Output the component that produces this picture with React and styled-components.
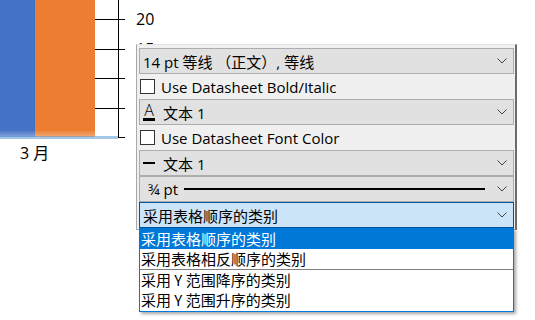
import React from "react";
import styled, { createGlobalStyle } from "styled-components";

const GlobalStyle = createGlobalStyle`
  html, body {
    margin: 0;
    padding: 0;
    background: #ffffff;
  }
  body {
    font-family: "Open Sans", "Noto Sans CJK SC", sans-serif;
    color: #000;
  }
`;

const Stage = styled.div`
  position: relative;
  width: 535px;
  height: 320px;
  overflow: hidden;
  background: #fff;
`;

const ChartSvg = styled.svg`
  display: block;
`;

const Panel = styled.div`
  position: absolute;
  left: 136px;
  top: 44px;
  width: 381px;
  box-sizing: border-box;
  padding: 3px 1px 1px 2px;
  background: #f0f0f0;
  border-top: 1px solid #e3e3e3;
  border-left: 1px solid #a9a9a9;
  border-right: 2px solid #6b6b6b;
  border-bottom: 1px solid #a9a9a9;
  display: flex;
  flex-direction: column;
`;

const Dropdown = styled.div`
  height: 26px;
  box-sizing: border-box;
  display: flex;
  align-items: center;
  padding: 0 6px 0 3px;
  background: ${(p) => (p.$focused ? "#cce4f7" : "#e1e1e1")};
  border: 1px solid ${(p) => (p.$focused ? "#005499" : "#adadad")};
  font-size: 15px;
  white-space: nowrap;
`;

const Value = styled.div`
  flex: 1;
  display: flex;
  align-items: center;
  gap: 6px;
  min-width: 0;
`;

const CheckRow = styled.label`
  height: 25px;
  display: flex;
  align-items: center;
  gap: 6px;
  padding-left: 1px;
  font-size: 15px;
  white-space: nowrap;
`;

const CheckBox = styled.span`
  flex-shrink: 0;
  width: 13px;
  height: 13px;
  background: #fff;
  border: 1px solid #333;
`;

const FontColorIcon = styled.span`
  position: relative;
  flex-shrink: 0;
  width: 12px;
  height: 20px;
  display: inline-flex;
  justify-content: center;
  font-family: "Open Sans", sans-serif;
  font-size: 16px;
  font-weight: 300;
  line-height: 16px;
  margin-right: 2px;

  &::after {
    content: "";
    position: absolute;
    left: 0;
    right: 0;
    bottom: 1px;
    height: 3px;
    background: #000;
  }
`;

const LineIcon = styled.span`
  flex-shrink: 0;
  width: 12px;
  height: 2px;
  background: #000;
  margin-right: 2px;
`;

const WeightLabel = styled.span`
  padding-left: 5px;
`;

const LineSample = styled.span`
  flex: 1;
  height: 2px;
  background: #000;
  margin-right: 12px;
`;

const Popup = styled.ul`
  position: absolute;
  left: 139px;
  top: 228px;
  width: 375px;
  margin: 0;
  padding: 0 0 1px;
  list-style: none;
  box-sizing: border-box;
  background: #fff;
  border: 1px solid #0078d7;
  box-shadow: 2px 2px 3px rgba(0, 0, 0, 0.35);
  font-family: "Noto Sans CJK SC", sans-serif;
  font-size: 15px;
`;

const Option = styled.li`
  height: 20px;
  line-height: 20px;
  padding-left: 1px;
  background: ${(p) => (p.$selected ? "#0078d7" : "transparent")};
  color: ${(p) => (p.$selected ? "#fff" : "#000")};
  white-space: nowrap;
`;

const Separator = styled.li`
  height: 1px;
  background: #808080;
`;

function Chevron() {
  return (
    <svg width="10" height="6" viewBox="0 0 10 6">
      <polyline points="0.5,0.5 5,5 9.5,0.5" fill="none" stroke="#444" strokeWidth="1" />
    </svg>
  );
}

function Chart() {
  const grid = [19.5, 49.5, 78.5, 108.5];
  return (
    <ChartSvg width="200" height="170" viewBox="0 0 200 170">
      <defs>
        <linearGradient id="fade" x1="0" y1="0" x2="0" y2="1">
          <stop offset="0" stopColor="#fff" stopOpacity="0" />
          <stop offset="1" stopColor="#fff" stopOpacity="0.35" />
        </linearGradient>
      </defs>
      {grid.map((y) => (
        <line key={y} x1="0" x2="125" y1={y} y2={y} stroke="#000" strokeWidth="1" />
      ))}
      <rect x="0" y="0" width="35" height="137" fill="#4472c4" />
      <rect x="35" y="0" width="60" height="137" fill="#ed7d31" />
      <rect x="0" y="130" width="95" height="7" fill="url(#fade)" />
      <line x1="118.5" x2="118.5" y1="0" y2="137" stroke="#000" strokeWidth="1" />
      <line x1="118" x2="125" y1="137.5" y2="137.5" stroke="#000" strokeWidth="1" />
      <rect x="0" y="136" width="118" height="3" fill="#5b9bd5" opacity="0.55" />
      <text x="136" y="25" fontFamily="Open Sans, sans-serif" fontSize="16">
        20
      </text>
      <text x="136" y="55" fontFamily="Open Sans, sans-serif" fontSize="16">
        15
      </text>
      <text x="20" y="159" fontFamily="Open Sans, Noto Sans CJK SC, sans-serif" fontSize="16">
        3 月
      </text>
    </ChartSvg>
  );
}

export default function App() {
  return (
    <Stage>
      <GlobalStyle />
      <Chart />
      <Panel>
        <Dropdown>
          <Value>14 pt 等线 （正文）, 等线</Value>
          <Chevron />
        </Dropdown>
        <CheckRow>
          <CheckBox />
          Use Datasheet Bold/Italic
        </CheckRow>
        <Dropdown>
          <Value>
            <FontColorIcon>A</FontColorIcon>
            文本 1
          </Value>
          <Chevron />
        </Dropdown>
        <CheckRow>
          <CheckBox />
          Use Datasheet Font Color
        </CheckRow>
        <Dropdown>
          <Value>
            <LineIcon />
            文本 1
          </Value>
          <Chevron />
        </Dropdown>
        <Dropdown>
          <Value>
            <WeightLabel>¾ pt</WeightLabel>
            <LineSample />
          </Value>
          <Chevron />
        </Dropdown>
        <Dropdown $focused>
          <Value>采用表格顺序的类别</Value>
          <Chevron />
        </Dropdown>
      </Panel>
      <Popup>
        <Option $selected>采用表格顺序的类别</Option>
        <Option>采用表格相反顺序的类别</Option>
        <Separator />
        <Option>采用 Y 范围降序的类别</Option>
        <Option>采用 Y 范围升序的类别</Option>
      </Popup>
    </Stage>
  );
}
